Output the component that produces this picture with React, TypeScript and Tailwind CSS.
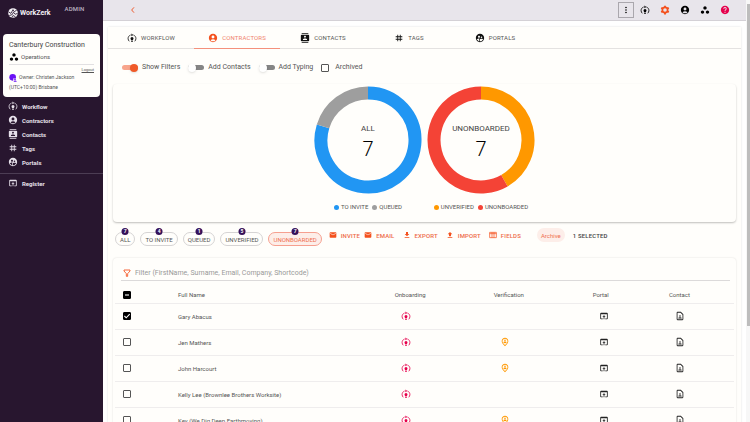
import { useState } from "react";
import type { ReactNode } from "react";
import clsx from "clsx";
import {
  MdAccountCircle,
  MdContacts,
  MdDownload,
  MdEmail,
  MdHelp,
  MdMoreVert,
  MdOpenInBrowser,
  MdOutlineContactPage,
  MdOutlinePersonPinCircle,
  MdSupervisedUserCircle,
  MdTag,
  MdUpload,
  MdWorkspaces,
} from "react-icons/md";

interface IconProps {
  className?: string;
}

interface Slice {
  label: string;
  color: string;
  from: number;
  to: number;
}

interface Person {
  name: string;
  verification: boolean;
}

const WorkflowIcon = ({ className }: IconProps) => (
  <svg viewBox="0 0 24 24" className={className} fill="currentColor">
    <path d="M12 9.500a3.600 3.600 0 0 1 3.600 3.600c0 2-1.600 2.700-1.900 4.900h-3.400c-.3-2.200-1.900-2.900-1.900-4.900A3.600 3.600 0 0 1 12 9.500zM10.300 19h3.400v2.500h-3.400z" />
    <path d="M10.500 1l4.500 3.500-4.500 3.500z" />
    <path
      d="M8.500 4.800C5 6.200 2.600 9.500 2.600 13.300c0 2.600 1.100 4.900 2.800 6.600M15.500 4.800c3.500 1.400 5.900 4.700 5.900 8.500 0 2.600-1.100 4.900-2.800 6.600"
      fill="none"
      stroke="currentColor"
      strokeWidth="2"
    />
  </svg>
);

const GearIcon = ({ className }: IconProps) => (
  <svg viewBox="0 0 24 24" className={className} fill="none" stroke="currentColor">
    <circle cx="12" cy="12" r="6.300" strokeWidth="4" />
    <path
      d="M12 1.500v4M12 18.500v4M2.900 6.800l3.500 2M17.600 15.200l3.500 2M2.900 17.200l3.500-2M17.600 8.800l3.500-2"
      strokeWidth="4.500"
    />
  </svg>
);

const LogoIcon = ({ className }: IconProps) => (
  <svg viewBox="0 0 24 24" className={className}>
    <circle cx="12" cy="12" r="11.500" fill="#f4f1f6" />
    <path
      d="M1 9l6 4 5-9 3 5 6-4M3 18l7-2 3-6 4 5 6-2M9 23l3-5 6 3"
      fill="none"
      stroke="#28162f"
      strokeWidth="2"
    />
  </svg>
);

const FunnelIcon = ({ className }: IconProps) => (
  <svg viewBox="0 0 24 24" className={className} fill="none" stroke="currentColor" strokeWidth="2.600">
    <path d="M3 3h18v3l-7 8v8h-4v-8L3 6z" />
  </svg>
);

const ColumnsIcon = ({ className }: IconProps) => (
  <svg viewBox="0 0 24 24" className={className} fill="none" stroke="currentColor" strokeWidth="2.200">
    <path d="M2 4h20v16H2zM2 8h20M9 4v16M15 4v16" />
  </svg>
);

const OwnerIcon = ({ className }: IconProps) => (
  <svg viewBox="0 0 24 24" className={className} fill="#6a11f5">
    <circle cx="11" cy="10" r="10" />
    <path d="M13 13h11v11H13z" fill="#fffefb" />
    <circle cx="18" cy="15.500" r="2.500" />
    <path d="M14 23c0-5 9-5 9 0z" />
  </svg>
);

const navItems = [
  { label: "Workflow", icon: WorkflowIcon },
  { label: "Contractors", icon: MdAccountCircle },
  { label: "Contacts", icon: MdContacts },
  { label: "Tags", icon: MdTag },
  { label: "Portals", icon: MdSupervisedUserCircle },
];

const chips = [
  { label: "ALL", count: 7 },
  { label: "TO INVITE", count: 4 },
  { label: "QUEUED", count: 1 },
  { label: "UNVERIFIED", count: 5 },
  { label: "UNONBOARDED", count: 7 },
];

const actions = [
  { label: "INVITE", icon: MdEmail, gap: "mr-1" },
  { label: "EMAIL", icon: MdEmail, gap: "mr-2" },
  { label: "EXPORT", icon: MdDownload, gap: "mr-2" },
  { label: "IMPORT", icon: MdUpload, gap: "mr-2" },
  { label: "FIELDS", icon: ColumnsIcon, gap: "mr-4" },
];

const people: Person[] = [
  { name: "Gary Abacus", verification: false },
  { name: "Jen Mathers", verification: true },
  { name: "John Harcourt", verification: true },
  { name: "Kelly Lee (Brownlee Brothers Worksite)", verification: false },
  { name: "Kev (We Dig Deep Earthmoving)", verification: true },
];

const allSlices: Slice[] = [
  { label: "TO INVITE", color: "#2196f3", from: 0, to: 0.797 },
  { label: "QUEUED", color: "#9e9e9e", from: 0.797, to: 1 },
];

const unonboardedSlices: Slice[] = [
  { label: "UNVERIFIED", color: "#ff9800", from: 0, to: 0.417 },
  { label: "UNONBOARDED", color: "#f44336", from: 0.417, to: 1 },
];

const NavLink = ({ label, children }: { label: string; children: ReactNode }) => (
  <a href="#" className="flex h-3.5 items-center gap-1 pl-2 text-[#e6e0ea]">
    {children}
    <span className="text-[6px] font-bold">{label}</span>
  </a>
);

const Sidebar = () => (
  <aside className="w-[103px] shrink-0 bg-[#28162f] font-medium">
    <header className="flex h-[34px] items-start">
      <a href="#" className="mt-2 ml-2 flex items-center gap-0.5 text-[7px] leading-[10px] font-bold text-[#f4f1f6]">
        <LogoIcon className="size-2.5" />
        WorkZerk
      </a>
      <span className="mt-[5px] ml-3.5 text-[6px] leading-[8px] tracking-wide text-[#bdb4c3]">ADMIN</span>
    </header>

    <section className="mx-[3px] h-[63px] rounded-sm bg-[#fffefb] px-1.5 pt-1.5 font-normal text-[#555]">
      <h1 className="text-[7px] leading-[10px] whitespace-nowrap text-[#444]">Canterbury Construction</h1>
      <p className="mt-0.5 flex items-center gap-0.5 text-[6px] leading-[10px]">
        <MdWorkspaces className="size-2.5 text-black" />
        Operations
      </p>
      <div className="mt-0.5 border-t border-[#e2e0e2] pt-0.5 text-right text-[4px] leading-[6px]">
        <a href="#" className="block underline">Logout</a>
      </div>
      <p className="flex items-center gap-0.5 text-[5px] leading-[9px]">
        <OwnerIcon className="size-2" />
        Owner: Christen Jackson
      </p>
      <p className="text-[5px] leading-[11px]">(UTC+10:00) Brisbane</p>
    </section>

    <nav className="pt-0.5">
      {navItems.map(({ label, icon: Icon }) => (
        <NavLink key={label} label={label}>
          <Icon className="size-2.5" />
        </NavLink>
      ))}
      <div className="mt-1 border-t border-[#4c3d54] pt-0.5">
        <NavLink label="Register">
          <MdOpenInBrowser className="size-2.5" />
        </NavLink>
      </div>
    </nav>
  </aside>
);

const TopBar = () => (
  <header className="flex h-[21px] shrink-0 items-center border-b border-[#d4d1d6] bg-[#e8e5eb] pr-4 pl-6">
    <button aria-label="Back" className="flex size-3 items-center justify-center text-[#ef5b2e]">
      <svg viewBox="0 0 24 24" className="size-2" fill="none" stroke="currentColor" strokeWidth="3">
        <path d="M15 4l-7 8 7 8" />
      </svg>
    </button>
    <div className="ml-auto flex items-center gap-2.5 text-black">
      <button aria-label="More" className="-mr-1 flex size-4 items-center justify-center border border-[#aaa7ad]">
        <MdMoreVert className="size-2.5" />
      </button>
      <button aria-label="Workflow"><WorkflowIcon className="size-2.5" /></button>
      <button aria-label="Settings"><GearIcon className="size-2.5 text-[#f4511e]" /></button>
      <button aria-label="Account"><MdAccountCircle className="size-2.5" /></button>
      <button aria-label="Workspaces"><MdWorkspaces className="size-2.5" /></button>
      <button aria-label="Help"><MdHelp className="size-2.5 text-[#e6004c]" /></button>
    </div>
  </header>
);

const Tabs = () => (
  <nav className="flex h-[22px] border-b border-[#e4e2e1]">
    {navItems.map(({ label, icon: Icon }) => {
      const active = label === "Contractors";
      return (
        <a
          key={label}
          href="#"
          className={clsx(
            "-mb-px flex w-[86px] items-center justify-center gap-1 border-b text-[6px] tracking-wide",
            active ? "border-[#f4907c] text-[#f0836d]" : "border-transparent text-[#555]",
          )}
        >
          <Icon className={clsx("size-2.5", active ? "text-[#f4511e]" : "text-[#111]")} />
          {label.toUpperCase()}
        </a>
      );
    })}
  </nav>
);

const Switch = ({ label, defaultChecked }: { label: string; defaultChecked?: boolean }) => (
  <label className="flex items-center gap-1">
    <span className="relative flex h-2.5 w-4 items-center">
      <input
        type="checkbox"
        role="switch"
        defaultChecked={defaultChecked}
        className="peer h-[5px] w-full appearance-none rounded-full bg-[#858585] checked:bg-[#f8a58c]"
      />
      <span className="pointer-events-none absolute top-px left-0 size-2 rounded-full bg-white shadow-sm peer-checked:left-2 peer-checked:bg-[#f05a28]" />
    </span>
    {label}
  </label>
);

interface CheckboxProps {
  label: string;
  checked?: boolean;
  mixed?: boolean;
  onChange?: () => void;
}

const Checkbox = ({ label, checked = false, mixed = false, onChange }: CheckboxProps) => (
  <span className="relative block size-2">
    <input
      type="checkbox"
      aria-label={label}
      checked={checked || mixed}
      onChange={onChange}
      className="block size-2 appearance-none rounded-[1px] border border-[#555] checked:border-black checked:bg-black"
    />
    {(checked || mixed) && (
      <svg
        viewBox="0 0 8 8"
        className="pointer-events-none absolute inset-0 size-2"
        fill="none"
        stroke="white"
        strokeWidth="1.100"
      >
        <path d={mixed ? "M2 4h4" : "M1.400 4l1.800 1.800L6.700 2.200"} />
      </svg>
    )}
  </span>
);

const point = (t: number, r: number): string => {
  const angle = t * 2 * Math.PI;
  return `${54 + r * Math.sin(angle)} ${54 - r * Math.cos(angle)}`;
};

const slicePath = ({ from, to }: Slice): string => {
  const large = to - from > 0.5 ? 1 : 0;
  return `M${point(from, 47)}A47 47 0 ${large} 1 ${point(to, 47)}`;
};

const Donut = ({ title, total, slices }: { title: string; total: number; slices: Slice[] }) => (
  <figure className="flex w-[113px] flex-col items-center">
    <div className="relative">
      <svg viewBox="0 0 108 108" className="size-[108px]" fill="none" strokeWidth="13">
        {slices.map((slice) => (
          <path key={slice.label} d={slicePath(slice)} stroke={slice.color} />
        ))}
      </svg>
      <div className="absolute inset-0 flex flex-col items-center pt-[38px]">
        <span className="text-[8px] leading-[10px] text-[#444]">{title}</span>
        <span className="mt-1 text-[20px] leading-[22px] font-light text-black">{total}</span>
      </div>
    </div>
    <figcaption className="mt-2 flex gap-1 text-[6px] leading-[10px] text-[#555]">
      {slices.map((slice) => (
        <span key={slice.label} className="flex items-center gap-0.5">
          <i className="size-[5px] rounded-full" style={{ backgroundColor: slice.color }} />
          {slice.label}
        </span>
      ))}
    </figcaption>
  </figure>
);

const Toolbar = () => (
  <div className="flex h-9 items-start pt-2.5 pl-0.5 whitespace-nowrap">
    <div className="flex gap-[5px]">
      {chips.map(({ label, count }) => {
        const active = label === "UNONBOARDED";
        return (
          <button
            key={label}
            className={clsx(
              "relative flex h-3.5 items-center rounded-full border px-1 text-[6px]",
              active ? "border-[#f6a090] bg-[#fdeee9] text-[#f0704f]" : "border-[#d6d4d4] text-[#555]",
            )}
          >
            {label}
            <span className="absolute -top-[5px] left-1/2 flex size-[7px] -translate-x-1/2 items-center justify-center rounded-full bg-[#35115a] text-[5px] font-bold text-white">
              {count}
            </span>
          </button>
        );
      })}
    </div>
    <div className="-mt-1 ml-[7px] flex h-3.5 items-center text-[6px] font-medium">
      {actions.map(({ label, icon: Icon, gap }) => (
        <button key={label} className={clsx("flex items-center gap-1 tracking-wide text-[#ee6a48]", gap)}>
          <Icon className="size-2 text-[#f4511e]" />
          {label}
        </button>
      ))}
      <button className="h-3.5 rounded-full bg-[#fdeee9] px-1 font-normal text-[#f0704f]">Archive</button>
      <span className="ml-2 tracking-wide text-[#444]">1 SELECTED</span>
    </div>
  </div>
);

const PeopleTable = () => {
  const [selected, setSelected] = useState<string[]>(["Gary Abacus"]);

  const toggle = (name: string): void => {
    setSelected((prev) => (prev.includes(name) ? prev.filter((n) => n !== name) : [...prev, name]));
  };

  return (
    <section className="rounded-sm px-0.5 pt-2 shadow-[0_0_2px_rgba(0,0,0,0.14)]">
      <label className="mr-1 ml-1.5 flex h-[15px] items-center gap-1 border-b border-[#dcdada] pl-0.5">
        <FunnelIcon className="size-2 text-[#f4511e]" />
        <input
          type="text"
          aria-label="Filter"
          placeholder="Filter (FirstName, Surname, Email, Company, Shortcode)"
          className="flex-1 text-[7px] leading-[10px] outline-none placeholder:text-[#999]"
        />
      </label>
      <table className="w-full table-fixed text-left text-[6px] text-[#555]">
        <thead>
          <tr className="h-[22px] border-b border-[#efeded] [&>th]:pt-1.5 [&>th]:font-normal">
            <th className="w-[63px] pl-2">
              <Checkbox label="Select all" mixed={selected.length > 0} onChange={() => setSelected([])} />
            </th>
            <th className="w-[35%]">Full Name</th>
            <th className="w-[16%]">Onboarding</th>
            <th className="w-[16%]">Verification</th>
            <th className="w-[12%]">Portal</th>
            <th className="pl-0.5">Contact</th>
          </tr>
        </thead>
        <tbody>
          {people.map(({ name, verification }) => (
            <tr key={name} className="h-[26px] border-b border-[#efeded] text-[#222]">
              <td className="pl-2">
                <Checkbox label={name} checked={selected.includes(name)} onChange={() => toggle(name)} />
              </td>
              <td className="text-[#555]">{name}</td>
              <td className="pl-1.5"><WorkflowIcon className="size-2.5 text-[#e6004c]" /></td>
              <td className="pl-1.5">
                {verification && <MdOutlinePersonPinCircle className="size-2.5 text-[#ff9800]" />}
              </td>
              <td className="pl-1.5"><MdOpenInBrowser className="size-2.5" /></td>
              <td className="pl-2"><MdOutlineContactPage className="size-2.5" /></td>
            </tr>
          ))}
        </tbody>
      </table>
    </section>
  );
};

const App = () => (
  <div className="flex h-screen overflow-hidden bg-white font-['Roboto',sans-serif]">
    <Sidebar />
    <div className="flex min-w-0 flex-1 flex-col overflow-hidden">
      <TopBar />
      <main className="mx-[5px] mt-1.5 flex-1 bg-[#fffefb] shadow-[0_0_2px_rgba(0,0,0,0.12)]">
        <Tabs />
        <div className="px-[5px]">
          <div className="flex h-[35px] items-center gap-2 pt-0.5 pl-[9px] text-[7px] text-[#555]">
            <Switch label="Show Filters" defaultChecked />
            <Switch label="Add Contacts" />
            <Switch label="Add Typing" />
            <label className="flex items-center gap-1.5">
              <input type="checkbox" className="size-2 appearance-none rounded-[1px] border border-[#555] checked:bg-black" />
              Archived
            </label>
          </div>
          <section className="flex h-[138px] justify-center rounded-sm pt-0.5 shadow-[0_1px_2px_rgba(0,0,0,0.25)]">
            <Donut title="ALL" total={7} slices={allSlices} />
            <Donut title="UNONBOARDED" total={7} slices={unonboardedSlices} />
          </section>
          <Toolbar />
          <PeopleTable />
        </div>
      </main>
    </div>
    <div className="w-1 shrink-0 bg-[#f7f7f7] pt-1">
      <div className="ml-px h-[322px] bg-[#bdbdbd]" />
    </div>
  </div>
);

export default App;
